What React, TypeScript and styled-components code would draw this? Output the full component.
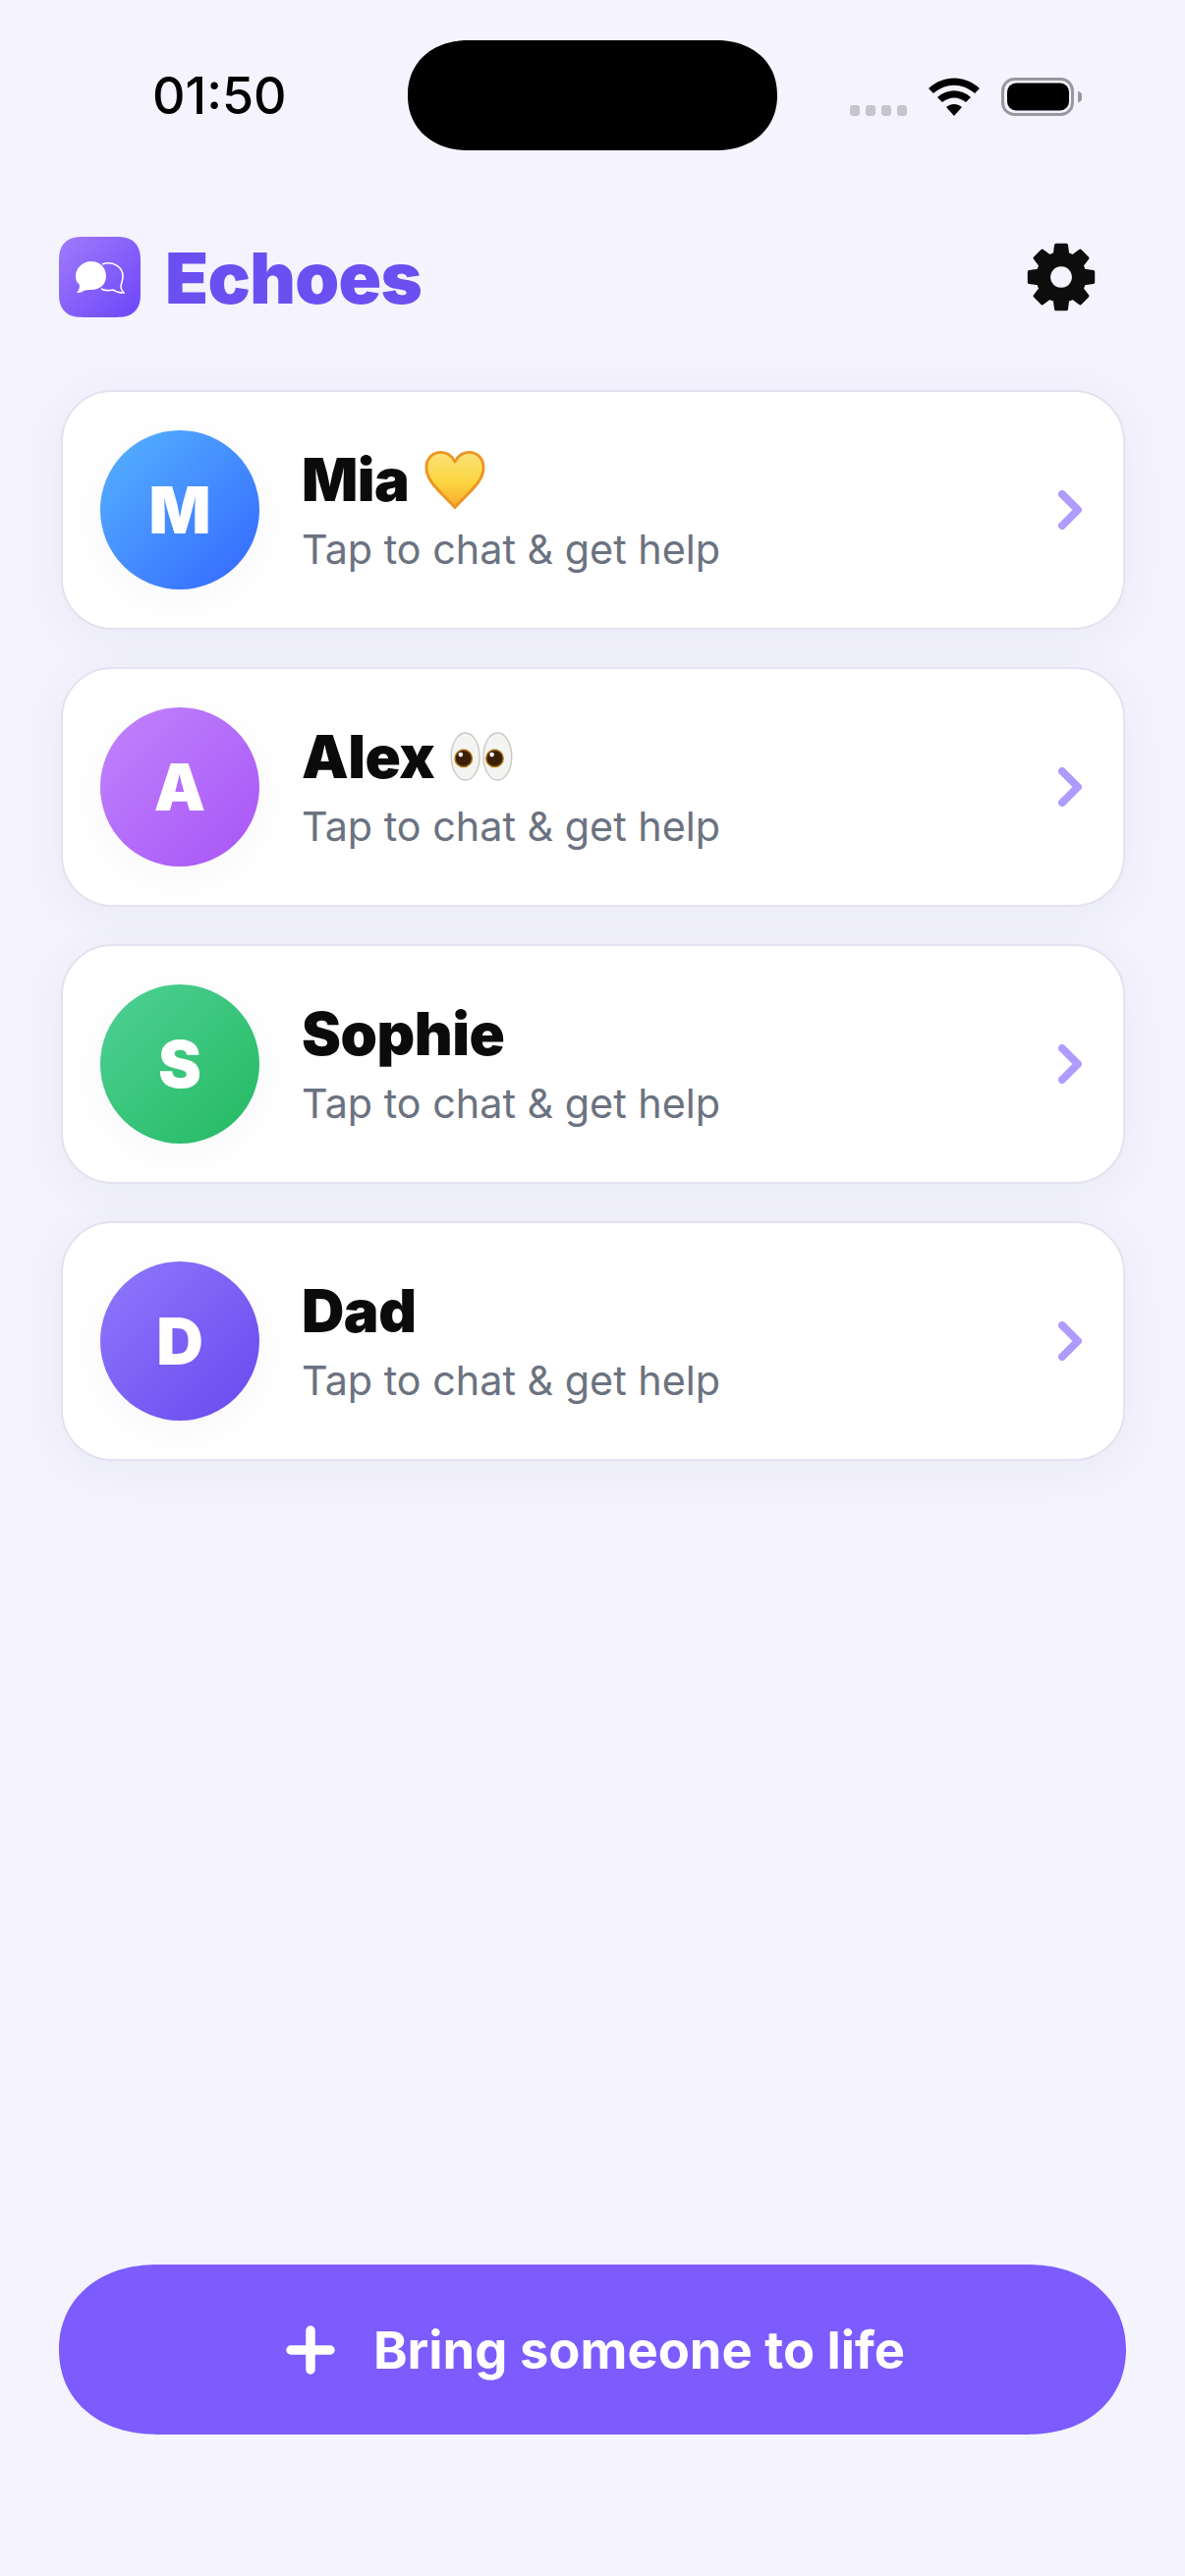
import styled, { createGlobalStyle } from "styled-components";

const GlobalStyle = createGlobalStyle`
  html, body {
    margin: 0;
    padding: 0;
    background: #f4f3fe;
  }
  body {
    font-family: Inter, "Liberation Sans", sans-serif;
  }
`;

const Screen = styled.div`
  width: 1206px;
  height: 2622px;
  box-sizing: border-box;
  background: #f4f3fe;
  display: flex;
  flex-direction: column;
  overflow: hidden;
`;

const StatusBar = styled.div`
  height: 111px;
  margin-top: 41px;
  display: grid;
  grid-template-columns: 415px 376px 1fr;
  flex: none;
`;

const Time = styled.div`
  padding: 0 0 0 155px;
  font-size: 52px;
  font-weight: 500;
  line-height: 111px;
  height: 111px;
  margin-top: 1px;
  color: #000;
`;

const Notch = styled.div`
  background: #000;
  border-radius: 62px / 55.5px;
  corner-shape: superellipse(1.1);
`;

const StatusIcons = styled.div`
  display: flex;
  align-items: center;
  padding: 2px 0 0 74px;
  gap: 22px;
`;

const SignalDots = styled.div`
  display: flex;
  gap: 6px;
  margin-top: 28px;
`;

const SignalDot = styled.span`
  width: 10px;
  height: 11px;
  border-radius: 3px;
  background: #c5c5cb;
`;

const Header = styled.header`
  display: flex;
  align-items: center;
  justify-content: space-between;
  padding: 0 91px 0 60px;
  margin-top: 89px;
  height: 82px;
  flex: none;
`;

const Brand = styled.div`
  display: flex;
  align-items: center;
  gap: 25px;
`;

const LogoTile = styled.div`
  width: 83px;
  height: 82px;
  border-radius: 24px;
  corner-shape: superellipse(1.3);
  background: linear-gradient(135deg, #a07bfb 0%, #6d45fa 100%);
  display: flex;
  align-items: center;
  justify-content: center;
`;

const BrandName = styled.h1`
  margin: 0;
  font-size: 72px;
  font-weight: 900;
  letter-spacing: -0.7px;
  color: #6b4ff0;
`;

const List = styled.main`
  display: flex;
  flex-direction: column;
  gap: 38px;
  padding: 0 61px 0 62px;
  margin-top: 74px;
  flex: none;
`;

const Card = styled.div`
  height: 244px;
  box-sizing: border-box;
  display: flex;
  align-items: center;
  padding: 0 42px 0 38px;
  background: #fff;
  border: 2px solid #e4e2f0;
  border-radius: 52px;
  box-shadow: 0 8px 48px rgba(70, 80, 140, 0.06);
`;

const Avatar = styled.div<{ $from: string; $to: string }>`
  width: 162px;
  height: 162px;
  border-radius: 50%;
  flex: none;
  background: linear-gradient(135deg, ${(p) => p.$from}, ${(p) => p.$to});
  box-shadow: 0 10px 40px rgba(60, 60, 120, 0.04);
  display: flex;
  align-items: center;
  justify-content: center;
  color: #fff;
  font-size: 66px;
  font-weight: 900;
`;

const Info = styled.div`
  flex: 1;
  margin-left: 43px;
  display: flex;
  flex-direction: column;
  gap: 10px;
`;

const Name = styled.div`
  display: flex;
  align-items: center;
  gap: 16px;
  height: 70px;
  font-size: 60px;
  font-weight: 900;
  letter-spacing: -0.5px;
  color: #0b0b0b;
`;

const Subtitle = styled.div`
  font-size: 41.3px;
  line-height: 52px;
  color: #6b7280;
`;

const BottomBar = styled.div`
  margin-top: auto;
  padding: 0 60px 144px;
`;

const AddButton = styled.button`
  width: 100%;
  height: 173px;
  border: none;
  padding: 0 0 0 6px;
  border-radius: 100px / 86.5px;
  corner-shape: superellipse(1.1);
  background: #7c5cff;
  color: #fff;
  font-family: inherit;
  font-size: 52.5px;
  font-weight: 700;
  display: flex;
  align-items: center;
  justify-content: center;
  gap: 39px;
`;

const GEAR = (() => {
  const pts: string[] = [];
  for (let i = 0; i < 8; i++) {
    const a = (i * Math.PI) / 4 - Math.PI / 2;
    const at = (r: number, d: number) => {
      const x = 50 + r * Math.cos(a + d);
      const y = 50 + r * Math.sin(a + d);
      return `${x.toFixed(2)} ${y.toFixed(2)}`;
    };
    pts.push(at(34.5, -0.27), at(47, -0.16), at(47, 0.16), at(34.5, 0.27));
  }
  return `M${pts.join("L")}Z`;
})();

function GearIcon() {
  return (
    <svg width="70" height="70" viewBox="0 0 100 100" overflow="visible">
      <path
        fillRule="evenodd"
        fill="#0d0d0d"
        stroke="#0d0d0d"
        strokeWidth="5"
        strokeLinejoin="round"
        d={`${GEAR}M50 32a18 18 0 1 0 .01 0Z`}
      />
    </svg>
  );
}

function Chevron() {
  return (
    <svg width="24" height="40" viewBox="0 0 24 40" fill="none">
      <path d="M4 4 L20 20 L4 36" stroke="#b09cff" strokeWidth="8" strokeLinecap="round" strokeLinejoin="round" />
    </svg>
  );
}

function Wifi() {
  return (
    <svg width="52" height="39" viewBox="0 0 52 39">
      <path d="M0 11 C15 -3 37 -3 52 11 L47 16 C34 5 18 5 5 16Z M9 20 C19 11 33 11 43 20 L38 25 C30 19 22 19 14 25Z M18 30 C23 26 29 26 34 30 L26 39Z" fill="#000" />
    </svg>
  );
}

function Battery() {
  return (
    <svg width="82" height="39" viewBox="0 0 82 39">
      <rect x="1.5" y="1.5" width="71" height="36" rx="12" fill="none" stroke="#98989e" strokeWidth="3" />
      <rect x="6" y="5.5" width="63" height="28" rx="9" fill="#000" />
      <path d="M78 14 a4.5 5.5 0 0 1 0 11Z" fill="#98989e" />
    </svg>
  );
}

function LogoBubbles() {
  return (
    <svg width="50" height="33" viewBox="0 0 50 33">
      <path d="M27 3 C38 -1 48 6 48 15 C48 20 46 23 46 26 C46 29 47 30 49 32 C44 32 41 31 38 29 C33 30 29 30 26 28" fill="none" stroke="#fff" strokeWidth="1.6" />
      <path d="M16 0 C25 0 31 7 31 15 C31 24 24 29 16 29 C13 29 10 29 8 30 C6 32 3 32 1 32 C3 30 4 27 4 24 C1 21 0 19 0 15 C0 7 7 0 16 0Z" fill="#fff" />
    </svg>
  );
}

function YellowHeart() {
  return (
    <svg width="62" height="61" viewBox="0 0 64 62">
      <defs>
        <linearGradient id="heartFill" x1="0" y1="0" x2="0" y2="1">
          <stop offset="0" stopColor="#fbe27a" />
          <stop offset="0.55" stopColor="#fdd53f" />
          <stop offset="1" stopColor="#f7a92c" />
        </linearGradient>
      </defs>
      <path d="M32 60 C20 46 2 34 2 18 C2 8 9 2 17 2 C24 2 29 6 32 12 C35 6 40 2 47 2 C55 2 62 8 62 18 C62 34 44 46 32 60Z" fill="url(#heartFill)" stroke="#ee9420" strokeWidth="3" strokeLinejoin="round" />
    </svg>
  );
}

function Eyes() {
  return (
    <svg width="64" height="50" viewBox="0 0 66 52">
      <ellipse cx="16" cy="26" rx="15" ry="25" fill="#f4f4f2" stroke="#c9c9c4" strokeWidth="1.5" />
      <ellipse cx="50" cy="26" rx="15" ry="25" fill="#f4f4f2" stroke="#c9c9c4" strokeWidth="1.5" />
      <circle cx="14" cy="28" r="9" fill="#3a1e05" stroke="#a87208" strokeWidth="1.5" />
      <circle cx="47" cy="28" r="9" fill="#3a1e05" stroke="#a87208" strokeWidth="1.5" />
      <circle cx="11" cy="24" r="2.4" fill="#fff" />
      <circle cx="44" cy="24" r="2.4" fill="#fff" />
    </svg>
  );
}

const people = [
  { name: "Mia", letter: "M", from: "#56b4ff", to: "#3366ff", badge: <YellowHeart /> },
  { name: "Alex", letter: "A", from: "#c084fc", to: "#a855f7", badge: <Eyes /> },
  { name: "Sophie", letter: "S", from: "#4fd196", to: "#24b961", badge: null },
  { name: "Dad", letter: "D", from: "#9078fc", to: "#6849ee", badge: null },
];

function App() {
  return (
    <Screen>
      <GlobalStyle />
      <StatusBar>
        <Time>01:50</Time>
        <Notch />
        <StatusIcons>
          <SignalDots>
            <SignalDot />
            <SignalDot />
            <SignalDot />
            <SignalDot />
          </SignalDots>
          <Wifi />
          <Battery />
        </StatusIcons>
      </StatusBar>
      <Header>
        <Brand>
          <LogoTile>
            <LogoBubbles />
          </LogoTile>
          <BrandName>Echoes</BrandName>
        </Brand>
        <GearIcon />
      </Header>
      <List>
        {people.map((p) => (
          <Card key={p.name}>
            <Avatar $from={p.from} $to={p.to}>{p.letter}</Avatar>
            <Info>
              <Name>
                {p.name}
                {p.badge}
              </Name>
              <Subtitle>Tap to chat &amp; get help</Subtitle>
            </Info>
            <Chevron />
          </Card>
        ))}
      </List>
      <BottomBar>
        <AddButton>
          <svg width="50" height="50" viewBox="0 0 50 50" fill="none">
            <path d="M25 5V45M5 25H45" stroke="#fff" strokeWidth="9.5" strokeLinecap="round" />
          </svg>
          Bring someone to life
        </AddButton>
      </BottomBar>
    </Screen>
  );
}

export default App;
